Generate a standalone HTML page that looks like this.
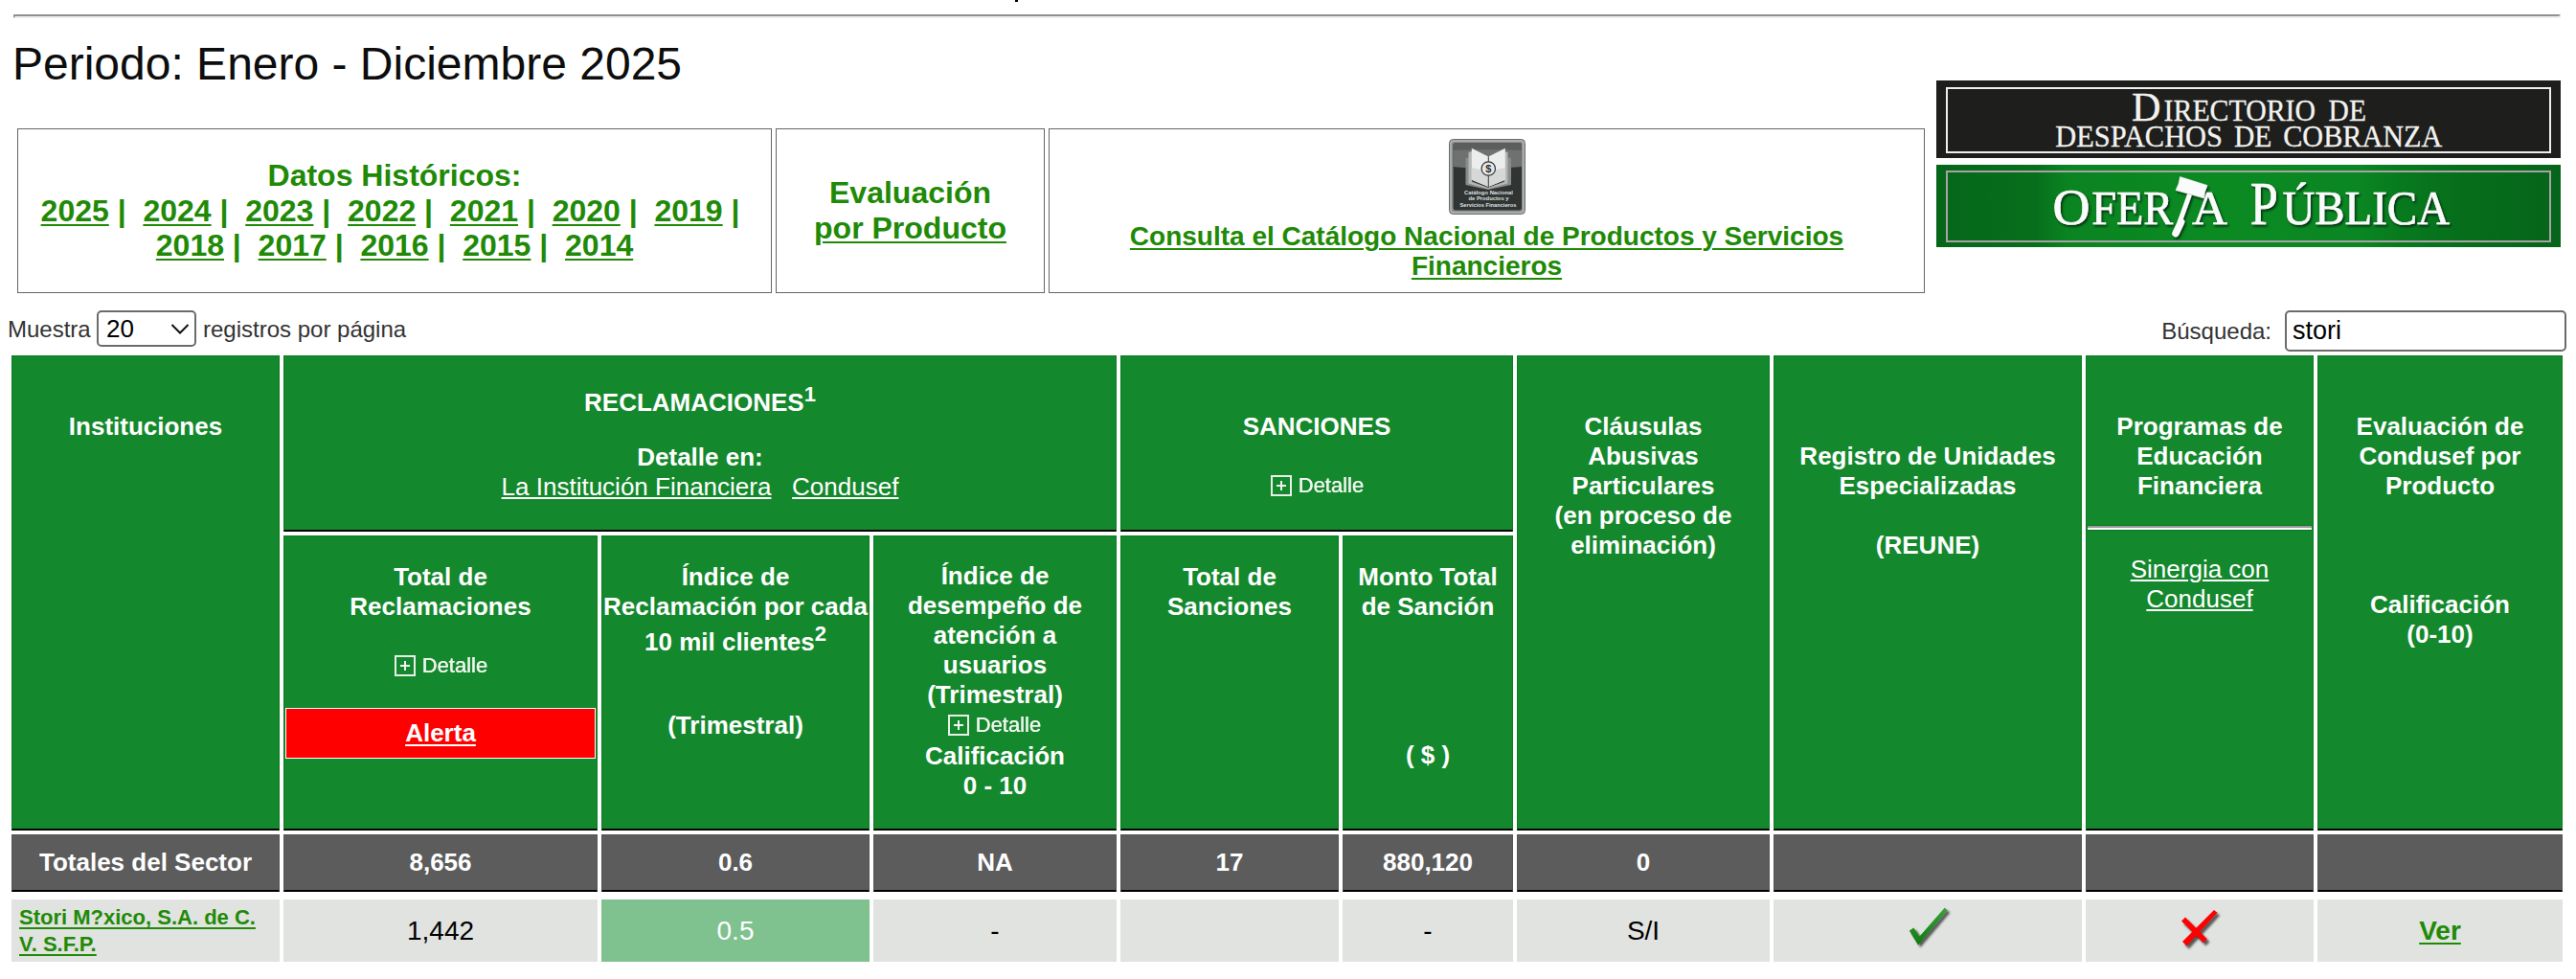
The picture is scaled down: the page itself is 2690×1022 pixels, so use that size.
<!DOCTYPE html>
<html><head><meta charset="utf-8"><title>Buró</title>
<style>
html,body{margin:0;padding:0;background:#fff;width:2690px;height:1022px;overflow:hidden;position:relative}
body{font-family:"Liberation Sans",sans-serif}
</style></head><body>
<div style="position:absolute;left:1060px;top:0px;width:3px;height:2px;background:#000"></div>
<div style="position:absolute;left:14px;top:15px;width:2656px;height:0;border-top:2px solid #8f918e;border-bottom:2px solid #eef0ee;border-left:2px solid #8f918e;border-right:2px solid #eef0ee"></div>
<div style="position:absolute;left:13px;top:39px;width:987px;text-align:left;font-size:48px;line-height:55px;white-space:nowrap;color:#0d0d0d">Periodo: Enero - Diciembre 2025</div>
<div style="position:absolute;left:18px;top:134px;width:788px;height:172px;box-sizing:border-box;border:1px solid #646664;background:#fff"></div>
<div style="position:absolute;left:810px;top:134px;width:281px;height:172px;box-sizing:border-box;border:1px solid #646664;background:#fff"></div>
<div style="position:absolute;left:1095px;top:134px;width:915px;height:172px;box-sizing:border-box;border:1px solid #646664;background:#fff"></div>
<div style="position:absolute;left:18px;top:165px;width:788px;text-align:center;font-size:32px;line-height:37px;white-space:nowrap;color:#208a06;font-weight:bold;">Datos Históricos:</div>
<div style="position:absolute;left:18px;top:202px;width:788px;text-align:center;font-size:32px;line-height:37px;white-space:nowrap;color:#208a06;font-weight:bold;"><span style="text-decoration:underline;text-decoration-thickness:2px;text-underline-offset:3px;">2025</span> |&nbsp; <span style="text-decoration:underline;text-decoration-thickness:2px;text-underline-offset:3px;">2024</span> |&nbsp; <span style="text-decoration:underline;text-decoration-thickness:2px;text-underline-offset:3px;">2023</span> |&nbsp; <span style="text-decoration:underline;text-decoration-thickness:2px;text-underline-offset:3px;">2022</span> |&nbsp; <span style="text-decoration:underline;text-decoration-thickness:2px;text-underline-offset:3px;">2021</span> |&nbsp; <span style="text-decoration:underline;text-decoration-thickness:2px;text-underline-offset:3px;">2020</span> |&nbsp; <span style="text-decoration:underline;text-decoration-thickness:2px;text-underline-offset:3px;">2019</span> |&nbsp;</div>
<div style="position:absolute;left:18px;top:238px;width:788px;text-align:center;font-size:32px;line-height:37px;white-space:nowrap;color:#208a06;font-weight:bold;"><span style="text-decoration:underline;text-decoration-thickness:2px;text-underline-offset:3px;">2018</span> |&nbsp; <span style="text-decoration:underline;text-decoration-thickness:2px;text-underline-offset:3px;">2017</span> |&nbsp; <span style="text-decoration:underline;text-decoration-thickness:2px;text-underline-offset:3px;">2016</span> |&nbsp; <span style="text-decoration:underline;text-decoration-thickness:2px;text-underline-offset:3px;">2015</span> |&nbsp; <span style="text-decoration:underline;text-decoration-thickness:2px;text-underline-offset:3px;">2014</span></div>
<div style="position:absolute;left:810px;top:183px;width:281px;text-align:center;font-size:32px;line-height:37px;white-space:nowrap;color:#208a06;font-weight:bold;">Evaluación</div>
<div style="position:absolute;left:810px;top:220px;width:281px;text-align:center;font-size:32px;line-height:37px;white-space:nowrap;color:#208a06;font-weight:bold;"><span style="text-decoration:underline;text-decoration-thickness:2px;text-underline-offset:3px;">por Producto</span></div>
<svg style="position:absolute;left:1513px;top:145px" width="80" height="79" viewBox="0 0 80 79">
<defs>
<linearGradient id="ig" x1="0" y1="0" x2="0" y2="1">
<stop offset="0" stop-color="#5a5c5b"/><stop offset="0.4" stop-color="#7a7c7b"/><stop offset="0.41" stop-color="#333736"/><stop offset="1" stop-color="#2c302f"/>
</linearGradient>
</defs>
<rect x="0.5" y="0.5" width="79" height="78" rx="4" fill="#8e908f" stroke="#6a6c6b" stroke-width="1"/>
<rect x="2" y="2" width="76" height="75" rx="3" fill="none" stroke="#b4b6b5" stroke-width="1.5"/>
<rect x="4.5" y="4" width="71.5" height="70.5" rx="2.5" fill="#303433"/>
<path d="M4.5 6.5 Q4.5 4 7 4 L73.5 4 Q76 4 76 6.5 L76 29 Q40 33 4.5 29 Z" fill="#6f7170"/>
<path d="M4.5 6.5 Q4.5 4 7 4 L73.5 4 Q76 4 76 6.5 L76 12 Q40 10 4.5 12 Z" fill="#5c5e5d"/>
<path d="M17.5 20 L23 19 L23 44 L41 51 L59 44 L59 19 L65 20 L65 48 L41 53 L17.5 48 Z" fill="#8a8c8b"/>
<path d="M20.5 14 L24 13 L24 45 L41 51 L58 45 L58 13 L61.5 14 L61.5 46.5 L41 52 L20.5 46.5 Z" fill="#b5b7b6"/>
<path d="M23.8 9.8 L41.3 18.4 L41.3 49.9 L23.8 42.7 Z" fill="#eceeed"/>
<path d="M58.8 9.8 L41.3 18.4 L41.3 49.9 L58.8 42.7 Z" fill="#eceeed"/>
<path d="M23.8 30 L41.3 34 L58.8 30 L58.8 42.7 L41.3 49.9 L23.8 42.7 Z" fill="#d6d8d7"/>
<line x1="41.3" y1="18.4" x2="41.3" y2="50" stroke="#3a3c3b" stroke-width="1"/>
<circle cx="41.3" cy="31" r="7.2" fill="#e6e8e7" stroke="#2f3130" stroke-width="1.2"/>
<text x="41.3" y="35.2" font-family="Liberation Sans" font-size="11" font-weight="bold" text-anchor="middle" fill="#2f3130">$</text>
<g font-family="Liberation Sans" font-size="6.2" font-weight="bold" text-anchor="middle" fill="#dfe1e0">
<text x="41.5" y="58" textLength="51" lengthAdjust="spacingAndGlyphs">Catálogo Nacional</text>
<text x="41.5" y="64.2" textLength="42" lengthAdjust="spacingAndGlyphs">de Productos y</text>
<text x="41" y="70.5" textLength="59" lengthAdjust="spacingAndGlyphs">Servicios Financieros</text>
</g></svg>
<div style="position:absolute;left:1095px;top:231px;width:915px;text-align:center;font-size:28px;line-height:32px;white-space:nowrap;color:#208a06;font-weight:bold;"><span style="text-decoration:underline;text-decoration-thickness:2px;text-underline-offset:3px;">Consulta el Catálogo Nacional de Productos y Servicios</span></div>
<div style="position:absolute;left:1095px;top:262px;width:915px;text-align:center;font-size:28px;line-height:32px;white-space:nowrap;color:#208a06;font-weight:bold;"><span style="text-decoration:underline;text-decoration-thickness:2px;text-underline-offset:3px;">Financieros</span></div>
<svg style="position:absolute;left:2022px;top:84px" width="652" height="81" viewBox="0 0 652 81">
<rect x="0" y="0" width="652" height="81" fill="#1e1e1c"/>
<rect x="11" y="8" width="630" height="67" fill="none" stroke="#eef0ed" stroke-width="2"/>
<g font-family="Liberation Serif" fill="#f2f3f0" stroke="#f2f3f0" stroke-width="0.3">
<text x="204" y="42.2" font-size="43" textLength="30.5" lengthAdjust="spacingAndGlyphs">D</text>
<text x="237.6" y="42.2" font-size="31" textLength="158.4" lengthAdjust="spacingAndGlyphs">IRECTORIO</text>
<text x="409.6" y="42.2" font-size="31" textLength="39.3" lengthAdjust="spacingAndGlyphs">DE</text>
<text x="124.3" y="69.1" font-size="31" textLength="174.7" lengthAdjust="spacingAndGlyphs">DESPACHOS</text>
<text x="311" y="69.1" font-size="31" textLength="39.3" lengthAdjust="spacingAndGlyphs">DE</text>
<text x="362.2" y="69.1" font-size="31" textLength="166.1" lengthAdjust="spacingAndGlyphs">COBRANZA</text>
</g></svg>
<svg style="position:absolute;left:2022px;top:172px" width="652" height="86" viewBox="0 0 652 86">
<defs>
<linearGradient id="gb" x1="0" y1="0" x2="1" y2="0">
<stop offset="0" stop-color="#05661a"/><stop offset="0.16" stop-color="#076f1c"/><stop offset="0.21" stop-color="#0a8421"/><stop offset="0.45" stop-color="#0b8a22"/><stop offset="0.68" stop-color="#0a8622"/><stop offset="0.74" stop-color="#087a1e"/><stop offset="0.84" stop-color="#066e1b"/><stop offset="1" stop-color="#05641a"/>
</linearGradient>
<filter id="sh" x="-10%" y="-20%" width="120%" height="140%"><feDropShadow dx="1.5" dy="2" stdDeviation="1" flood-color="#012208" flood-opacity="0.85"/></filter>
</defs>
<rect x="0" y="0" width="652" height="86" fill="url(#gb)"/>
<rect x="11" y="7" width="630" height="73" fill="none" stroke="#a8a2a7" stroke-width="2"/>
<g font-family="Liberation Serif" fill="#fbfbfb" stroke="#fbfbfb" stroke-width="0.7" filter="url(#sh)">
<text x="121.6" y="61.8" font-size="52" textLength="39" lengthAdjust="spacingAndGlyphs">O</text>
<text x="162.2" y="61.5" font-size="50" textLength="85" lengthAdjust="spacingAndGlyphs">FER</text>
<text x="267" y="61.5" font-size="51" textLength="37" lengthAdjust="spacingAndGlyphs">A</text>
<text x="327.8" y="61.6" font-size="62.7" textLength="29" lengthAdjust="spacingAndGlyphs">P</text>
<text x="361.5" y="61.6" font-size="51" textLength="174.5" lengthAdjust="spacingAndGlyphs">ÚBLICA</text>
<path d="M254.5,12.5 L283,21.5 Q279.8,28 279.5,34.8 L250,26.5 Q253.8,19.5 254.5,12.5 Z" fill="#fbfbfb" stroke-width="0.5"/>
<line x1="264.5" y1="31" x2="254" y2="60" stroke="#fbfbfb" stroke-width="5"/>
<line x1="255.5" y1="60" x2="250" y2="71.5" stroke="#fbfbfb" stroke-width="7.5" stroke-linecap="round"/>
</g></svg>
<div style="position:absolute;left:8px;top:330px;width:292px;text-align:left;font-size:24px;line-height:28px;white-space:nowrap;color:#333">Muestra</div>
<div style="position:absolute;left:101px;top:324px;width:104px;height:38px;box-sizing:border-box;border:2px solid #6b6b6b;border-radius:5px;background:#fff"></div>
<div style="position:absolute;left:111px;top:328px;width:89px;text-align:left;font-size:26px;line-height:31px;white-space:nowrap;color:#000">20</div>
<svg style="position:absolute;left:177px;top:336px" width="22" height="14"><path d="M2.5 3 L11 11.5 L19.5 3" fill="none" stroke="#111" stroke-width="2"/></svg>
<div style="position:absolute;left:212px;top:330px;width:388px;text-align:left;font-size:24px;line-height:28px;white-space:nowrap;color:#333">registros por página</div>
<div style="position:absolute;left:2200px;top:332px;width:172px;text-align:right;font-size:24px;line-height:28px;white-space:nowrap;color:#333">Búsqueda:</div>
<div style="position:absolute;left:2386px;top:324px;width:294px;height:43px;box-sizing:border-box;border:2px solid #6b6b6b;border-radius:5px;background:#fff"></div>
<div style="position:absolute;left:2394px;top:330px;width:206px;text-align:left;font-size:27px;line-height:31px;white-space:nowrap;color:#000">stori</div>
<div style="position:absolute;left:12px;top:371px;width:280px;height:496px;box-sizing:border-box;background:#14882c;border:1px solid #0a7d20;border-bottom:2px solid #000"></div>
<div style="position:absolute;left:296px;top:371px;width:870px;height:184px;box-sizing:border-box;background:#14882c;border:1px solid #0a7d20;border-bottom:2px solid #000"></div>
<div style="position:absolute;left:1170px;top:371px;width:410px;height:184px;box-sizing:border-box;background:#14882c;border:1px solid #0a7d20;border-bottom:2px solid #000"></div>
<div style="position:absolute;left:1584px;top:371px;width:264px;height:496px;box-sizing:border-box;background:#14882c;border:1px solid #0a7d20;border-bottom:2px solid #000"></div>
<div style="position:absolute;left:1852px;top:371px;width:322px;height:496px;box-sizing:border-box;background:#14882c;border:1px solid #0a7d20;border-bottom:2px solid #000"></div>
<div style="position:absolute;left:2178px;top:371px;width:238px;height:496px;box-sizing:border-box;background:#14882c;border:1px solid #0a7d20;border-bottom:2px solid #000"></div>
<div style="position:absolute;left:2420px;top:371px;width:256px;height:496px;box-sizing:border-box;background:#14882c;border:1px solid #0a7d20;border-bottom:2px solid #000"></div>
<div style="position:absolute;left:296px;top:559px;width:328px;height:308px;box-sizing:border-box;background:#14882c;border:1px solid #0a7d20;border-bottom:2px solid #000"></div>
<div style="position:absolute;left:628px;top:559px;width:280px;height:308px;box-sizing:border-box;background:#14882c;border:1px solid #0a7d20;border-bottom:2px solid #000"></div>
<div style="position:absolute;left:912px;top:559px;width:254px;height:308px;box-sizing:border-box;background:#14882c;border:1px solid #0a7d20;border-bottom:2px solid #000"></div>
<div style="position:absolute;left:1170px;top:559px;width:228px;height:308px;box-sizing:border-box;background:#14882c;border:1px solid #0a7d20;border-bottom:2px solid #000"></div>
<div style="position:absolute;left:1402px;top:559px;width:178px;height:308px;box-sizing:border-box;background:#14882c;border:1px solid #0a7d20;border-bottom:2px solid #000"></div>
<div style="position:absolute;left:12px;top:430px;width:280px;text-align:center;font-size:26px;line-height:31px;white-space:nowrap;color:#fff;font-weight:bold;">Instituciones</div>
<div style="position:absolute;left:296px;top:405px;width:870px;text-align:center;font-size:26px;line-height:31px;white-space:nowrap;color:#fff;font-weight:bold;">RECLAMACIONES<span style="font-size:22px;position:relative;top:-10px">1</span></div>
<div style="position:absolute;left:296px;top:462px;width:870px;text-align:center;font-size:26px;line-height:31px;white-space:nowrap;color:#fff;font-weight:bold;">Detalle en:</div>
<div style="position:absolute;left:296px;top:493px;width:870px;text-align:center;font-size:26px;line-height:31px;white-space:nowrap;color:#fff;"><span style="text-decoration:underline;text-underline-offset:2px">La Institución Financiera</span>&nbsp;&nbsp;&nbsp;<span style="text-decoration:underline;text-underline-offset:2px">Condusef</span></div>
<div style="position:absolute;left:1170px;top:430px;width:410px;text-align:center;font-size:26px;line-height:31px;white-space:nowrap;color:#fff;font-weight:bold;">SANCIONES</div>
<div style="position:absolute;left:1327px;top:496px;width:98px;height:22px;">
<div style="position:absolute;left:0;top:0;width:22px;height:22px;box-sizing:border-box;border:2px solid #e8f0e8"></div>
<div style="position:absolute;left:6px;top:10px;width:10px;height:1.5px;background:#f0f4f0"></div>
<div style="position:absolute;left:10.25px;top:6px;width:1.5px;height:10px;background:#f0f4f0"></div>
<div style="position:absolute;left:28.5px;top:-2px;font-size:22px;line-height:26px;color:#eef4ee;filter:blur(0.6px);text-shadow:0.4px 0 0 #eef4ee;white-space:nowrap">Detalle</div>
</div>
<div style="position:absolute;left:1584px;top:430px;width:264px;text-align:center;font-size:26px;line-height:31px;white-space:nowrap;color:#fff;font-weight:bold;">Cláusulas<br>Abusivas<br>Particulares<br>(en proceso de<br>eliminación)</div>
<div style="position:absolute;left:1852px;top:461px;width:322px;text-align:center;font-size:26px;line-height:31px;white-space:nowrap;color:#fff;font-weight:bold;">Registro de Unidades<br>Especializadas<br><br>(REUNE)</div>
<div style="position:absolute;left:2178px;top:430px;width:238px;text-align:center;font-size:26px;line-height:31px;white-space:nowrap;color:#fff;font-weight:bold;">Programas de<br>Educación<br>Financiera</div>
<div style="position:absolute;left:2179px;top:548px;width:236px;height:6px;box-sizing:border-box;border:1px solid #0a7d20;border-right:none"></div>
<div style="position:absolute;left:2180px;top:549px;width:234px;height:2px;background:#9c9a9c"></div>
<div style="position:absolute;left:2180px;top:551px;width:234px;height:2px;background:#fbf8fb"></div>
<div style="position:absolute;left:2178px;top:579px;width:238px;text-align:center;font-size:26px;line-height:31px;white-space:nowrap;color:#fff;"><span style="text-decoration:underline;text-underline-offset:2px">Sinergia con</span><br><span style="text-decoration:underline;text-underline-offset:2px">Condusef</span></div>
<div style="position:absolute;left:2420px;top:430px;width:256px;text-align:center;font-size:26px;line-height:31px;white-space:nowrap;color:#fff;font-weight:bold;">Evaluación de<br>Condusef por<br>Producto</div>
<div style="position:absolute;left:2420px;top:616px;width:256px;text-align:center;font-size:26px;line-height:31px;white-space:nowrap;color:#fff;font-weight:bold;">Calificación<br>(0-10)</div>
<div style="position:absolute;left:296px;top:587px;width:328px;text-align:center;font-size:26px;line-height:31px;white-space:nowrap;color:#fff;font-weight:bold;">Total de<br>Reclamaciones</div>
<div style="position:absolute;left:412px;top:684px;width:98px;height:22px;">
<div style="position:absolute;left:0;top:0;width:22px;height:22px;box-sizing:border-box;border:2px solid #e8f0e8"></div>
<div style="position:absolute;left:6px;top:10px;width:10px;height:1.5px;background:#f0f4f0"></div>
<div style="position:absolute;left:10.25px;top:6px;width:1.5px;height:10px;background:#f0f4f0"></div>
<div style="position:absolute;left:28.5px;top:-2px;font-size:22px;line-height:26px;color:#eef4ee;filter:blur(0.6px);text-shadow:0.4px 0 0 #eef4ee;white-space:nowrap">Detalle</div>
</div>
<div style="position:absolute;left:298px;top:739px;width:324px;height:53px;box-sizing:border-box;border:1px solid #fff;background:#ff0000"></div>
<div style="position:absolute;left:296px;top:750px;width:328px;text-align:center;font-size:26px;line-height:31px;white-space:nowrap;color:#fff;font-weight:bold;"><span style="text-decoration:underline;text-decoration-thickness:2px;text-underline-offset:3px;">Alerta</span></div>
<div style="position:absolute;left:628px;top:587px;width:280px;text-align:center;font-size:26px;line-height:31px;white-space:nowrap;color:#fff;font-weight:bold;">Índice de<br>Reclamación por cada</div>
<div style="position:absolute;left:628px;top:655px;width:280px;text-align:center;font-size:26px;line-height:31px;white-space:nowrap;color:#fff;font-weight:bold;">10 mil clientes<span style="font-size:22px;position:relative;top:-10px">2</span></div>
<div style="position:absolute;left:628px;top:742px;width:280px;text-align:center;font-size:26px;line-height:31px;white-space:nowrap;color:#fff;font-weight:bold;">(Trimestral)</div>
<div style="position:absolute;left:912px;top:586px;width:254px;text-align:center;font-size:26px;line-height:31px;white-space:nowrap;color:#fff;font-weight:bold;">Índice de<br>desempeño de<br>atención a<br>usuarios<br>(Trimestral)</div>
<div style="position:absolute;left:990px;top:746px;width:98px;height:22px;">
<div style="position:absolute;left:0;top:0;width:22px;height:22px;box-sizing:border-box;border:2px solid #e8f0e8"></div>
<div style="position:absolute;left:6px;top:10px;width:10px;height:1.5px;background:#f0f4f0"></div>
<div style="position:absolute;left:10.25px;top:6px;width:1.5px;height:10px;background:#f0f4f0"></div>
<div style="position:absolute;left:28.5px;top:-2px;font-size:22px;line-height:26px;color:#eef4ee;filter:blur(0.6px);text-shadow:0.4px 0 0 #eef4ee;white-space:nowrap">Detalle</div>
</div>
<div style="position:absolute;left:912px;top:774px;width:254px;text-align:center;font-size:26px;line-height:31px;white-space:nowrap;color:#fff;font-weight:bold;">Calificación<br>0 - 10</div>
<div style="position:absolute;left:1170px;top:587px;width:228px;text-align:center;font-size:26px;line-height:31px;white-space:nowrap;color:#fff;font-weight:bold;">Total de<br>Sanciones</div>
<div style="position:absolute;left:1402px;top:587px;width:178px;text-align:center;font-size:26px;line-height:31px;white-space:nowrap;color:#fff;font-weight:bold;">Monto Total<br>de Sanción</div>
<div style="position:absolute;left:1402px;top:773px;width:178px;text-align:center;font-size:26px;line-height:31px;white-space:nowrap;color:#fff;font-weight:bold;">( $ )</div>
<div style="position:absolute;left:12px;top:871px;width:280px;height:60px;box-sizing:border-box;background:#5c5c5c;border:1px solid #565656;border-bottom:2px solid #000"></div>
<div style="position:absolute;left:296px;top:871px;width:328px;height:60px;box-sizing:border-box;background:#5c5c5c;border:1px solid #565656;border-bottom:2px solid #000"></div>
<div style="position:absolute;left:628px;top:871px;width:280px;height:60px;box-sizing:border-box;background:#5c5c5c;border:1px solid #565656;border-bottom:2px solid #000"></div>
<div style="position:absolute;left:912px;top:871px;width:254px;height:60px;box-sizing:border-box;background:#5c5c5c;border:1px solid #565656;border-bottom:2px solid #000"></div>
<div style="position:absolute;left:1170px;top:871px;width:228px;height:60px;box-sizing:border-box;background:#5c5c5c;border:1px solid #565656;border-bottom:2px solid #000"></div>
<div style="position:absolute;left:1402px;top:871px;width:178px;height:60px;box-sizing:border-box;background:#5c5c5c;border:1px solid #565656;border-bottom:2px solid #000"></div>
<div style="position:absolute;left:1584px;top:871px;width:264px;height:60px;box-sizing:border-box;background:#5c5c5c;border:1px solid #565656;border-bottom:2px solid #000"></div>
<div style="position:absolute;left:1852px;top:871px;width:322px;height:60px;box-sizing:border-box;background:#5c5c5c;border:1px solid #565656;border-bottom:2px solid #000"></div>
<div style="position:absolute;left:2178px;top:871px;width:238px;height:60px;box-sizing:border-box;background:#5c5c5c;border:1px solid #565656;border-bottom:2px solid #000"></div>
<div style="position:absolute;left:2420px;top:871px;width:256px;height:60px;box-sizing:border-box;background:#5c5c5c;border:1px solid #565656;border-bottom:2px solid #000"></div>
<div style="position:absolute;left:12px;top:885px;width:280px;text-align:center;font-size:26px;line-height:31px;white-space:nowrap;color:#fff;font-weight:bold;">Totales del Sector</div>
<div style="position:absolute;left:296px;top:885px;width:328px;text-align:center;font-size:26px;line-height:31px;white-space:nowrap;color:#fff;font-weight:bold;">8,656</div>
<div style="position:absolute;left:628px;top:885px;width:280px;text-align:center;font-size:26px;line-height:31px;white-space:nowrap;color:#fff;font-weight:bold;">0.6</div>
<div style="position:absolute;left:912px;top:885px;width:254px;text-align:center;font-size:26px;line-height:31px;white-space:nowrap;color:#fff;font-weight:bold;">NA</div>
<div style="position:absolute;left:1170px;top:885px;width:228px;text-align:center;font-size:26px;line-height:31px;white-space:nowrap;color:#fff;font-weight:bold;">17</div>
<div style="position:absolute;left:1402px;top:885px;width:178px;text-align:center;font-size:26px;line-height:31px;white-space:nowrap;color:#fff;font-weight:bold;">880,120</div>
<div style="position:absolute;left:1584px;top:885px;width:264px;text-align:center;font-size:26px;line-height:31px;white-space:nowrap;color:#fff;font-weight:bold;">0</div>
<div style="position:absolute;left:12px;top:939px;width:280px;height:65px;background:#e1e3e0"></div>
<div style="position:absolute;left:296px;top:939px;width:328px;height:65px;background:#e1e3e0"></div>
<div style="position:absolute;left:628px;top:939px;width:280px;height:65px;background:#80c190"></div>
<div style="position:absolute;left:912px;top:939px;width:254px;height:65px;background:#e1e3e0"></div>
<div style="position:absolute;left:1170px;top:939px;width:228px;height:65px;background:#e1e3e0"></div>
<div style="position:absolute;left:1402px;top:939px;width:178px;height:65px;background:#e1e3e0"></div>
<div style="position:absolute;left:1584px;top:939px;width:264px;height:65px;background:#e1e3e0"></div>
<div style="position:absolute;left:1852px;top:939px;width:322px;height:65px;background:#e1e3e0"></div>
<div style="position:absolute;left:2178px;top:939px;width:238px;height:65px;background:#e1e3e0"></div>
<div style="position:absolute;left:2420px;top:939px;width:256px;height:65px;background:#e1e3e0"></div>
<div style="position:absolute;left:20px;top:944px;width:270px;font-size:22px;line-height:28px;font-weight:bold;color:#208a06;white-space:nowrap"><span style="text-decoration:underline;text-decoration-thickness:2px;text-underline-offset:3px;">Stori M?xico, S.A. de C.</span><br><span style="text-decoration:underline;text-decoration-thickness:2px;text-underline-offset:3px;">V. S.F.P.</span></div>
<div style="position:absolute;left:296px;top:956px;width:328px;text-align:center;font-size:28px;line-height:32px;white-space:nowrap;color:#000">1,442</div>
<div style="position:absolute;left:628px;top:956px;width:280px;text-align:center;font-size:28px;line-height:32px;white-space:nowrap;color:#fff">0.5</div>
<div style="position:absolute;left:912px;top:956px;width:254px;text-align:center;font-size:28px;line-height:32px;white-space:nowrap;color:#000">-</div>
<div style="position:absolute;left:1402px;top:956px;width:178px;text-align:center;font-size:28px;line-height:32px;white-space:nowrap;color:#000">-</div>
<div style="position:absolute;left:1584px;top:956px;width:264px;text-align:center;font-size:28px;line-height:32px;white-space:nowrap;color:#000">S/I</div>
<div style="position:absolute;left:2420px;top:956px;width:256px;text-align:center;font-size:28px;line-height:32px;white-space:nowrap;color:#208a06;font-weight:bold;"><span style="text-decoration:underline;text-decoration-thickness:2px;text-underline-offset:3px;">Ver</span></div>
<svg style="position:absolute;left:1985px;top:940px" width="60" height="55" viewBox="1985 940 60 55">
<defs><filter id="bl" x="-30%" y="-30%" width="160%" height="160%"><feGaussianBlur stdDeviation="1.1"/></filter>
<linearGradient id="cg" x1="0" y1="0" x2="0" y2="1"><stop offset="0" stop-color="#3aa23a"/><stop offset="1" stop-color="#0e7a10"/></linearGradient></defs>
<polygon transform="translate(2.5,2.5)" filter="url(#bl)" fill="#2a2a2a" fill-opacity="0.75" points="1993.8,971.6 1998.4,968.5 2004.5,977.4 2030.8,947.6 2033.6,950.4 2003,986.6"/>
<polygon fill="url(#cg)" points="1993.8,971.6 1998.4,968.5 2004.5,977.4 2030.8,947.6 2033.6,950.4 2003,986.6"/>
</svg>
<svg style="position:absolute;left:2265px;top:940px" width="60" height="55" viewBox="2265 940 60 55">
<g transform="translate(2.5,3)" filter="url(#bl)" fill="#262626" fill-opacity="0.75">
<polygon points="2278,961.5 2282,957.5 2304.8,980.3 2300.8,984.3"/>
<polygon points="2279,983 2312,950 2315.5,952.8 2283.4,987.6"/>
</g>
<g fill="#ff0000">
<polygon points="2278,961.5 2282,957.5 2304.8,980.3 2300.8,984.3"/>
<polygon points="2279,983 2312,950 2315.5,952.8 2283.4,987.6"/>
</g>
</svg>
</body></html>
